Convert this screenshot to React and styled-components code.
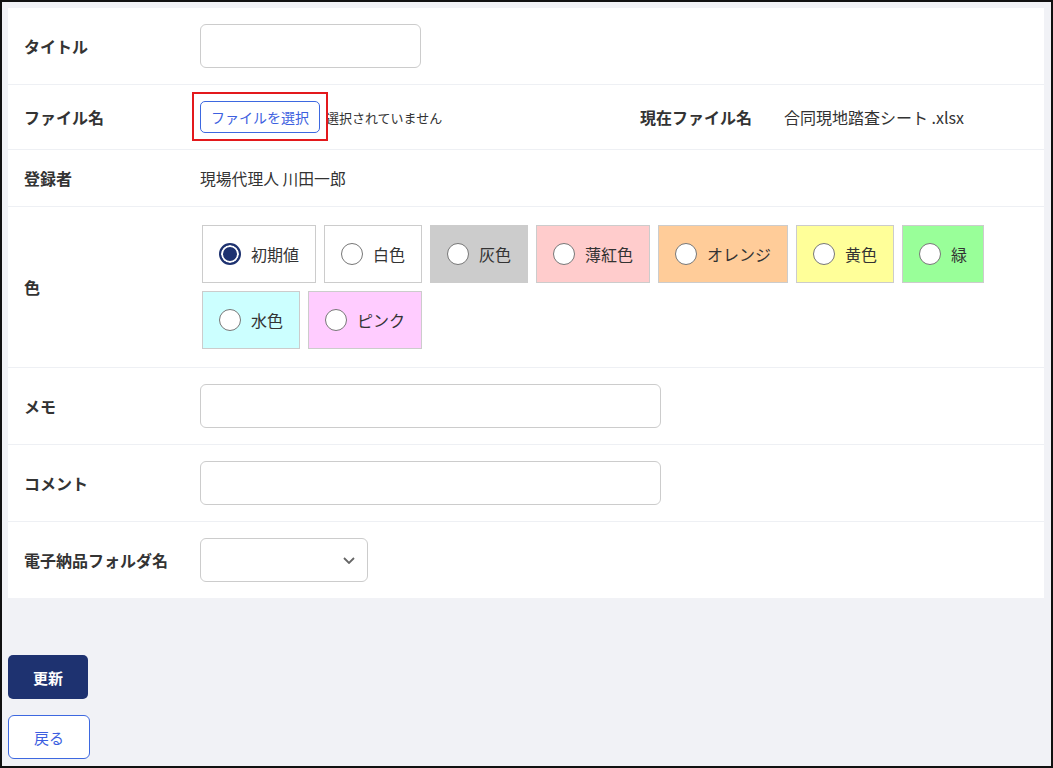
import styled, { createGlobalStyle } from 'styled-components';

const GlobalStyle = createGlobalStyle`
  html, body {
    margin: 0;
    padding: 0;
  }
  body {
    font-family: "Noto Sans CJK JP", "Noto Sans", sans-serif;
    color: #333;
  }
  * {
    box-sizing: border-box;
  }
`;

const colors = [
  { label: '初期値', bg: '#ffffff', checked: true },
  { label: '白色', bg: '#ffffff' },
  { label: '灰色', bg: '#cccccc' },
  { label: '薄紅色', bg: '#ffcccc' },
  { label: 'オレンジ', bg: '#ffcc99' },
  { label: '黄色', bg: '#ffff99' },
  { label: '緑', bg: '#99ff99' },
  { label: '水色', bg: '#ccffff' },
  { label: 'ピンク', bg: '#ffccff' },
];

const App = () => {
  return (
    <>
      <GlobalStyle />
      <Page>
        <Card>
          <Row>
            <Label>タイトル</Label>
            <TextInput type="text" width="221px" />
          </Row>
          <Row>
            <Label>ファイル名</Label>
            <FileCell>
              <FileHighlight>
                <FileButton type="button">ファイルを選択</FileButton>
              </FileHighlight>
              <FileNote>選択されていません</FileNote>
            </FileCell>
            <SubLabel>現在ファイル名</SubLabel>
            <Value>合同現地踏査シート .xlsx</Value>
          </Row>
          <Row tight>
            <Label>登録者</Label>
            <Value size="15.8px">現場代理人 川田一郎</Value>
          </Row>
          <Row colors>
            <Label>色</Label>
            <ColorList>
              {colors.map((c) => (
                <ColorOption key={c.label} bg={c.bg}>
                  <Radio type="radio" name="color" defaultChecked={c.checked} />
                  <span>{c.label}</span>
                </ColorOption>
              ))}
            </ColorList>
          </Row>
          <Row>
            <Label>メモ</Label>
            <TextInput type="text" width="461px" />
          </Row>
          <Row>
            <Label>コメント</Label>
            <TextInput type="text" width="461px" />
          </Row>
          <Row last>
            <Label>電子納品フォルダ名</Label>
            <SelectWrap>
              <Select defaultValue="">
                <option value=""></option>
              </Select>
              <Chevron width="12" height="7" viewBox="0 0 12 7">
                <path d="M1 1 L6 6 L11 1" fill="none" stroke="#666" strokeWidth="1.8" />
              </Chevron>
            </SelectWrap>
          </Row>
        </Card>
        <Actions>
          <PrimaryButton type="button">更新</PrimaryButton>
          <OutlineButton type="button">戻る</OutlineButton>
        </Actions>
      </Page>
    </>
  );
};

export default App;

const Page = styled.div`
  height: 768px;
  border: 2px solid #111;
  background: #f1f2f6;
  padding: 6px 7px 6px 6px;
  display: flex;
  flex-direction: column;
`;

const Card = styled.div`
  background: #fff;
  display: flex;
  flex-direction: column;
`;

const Row = styled.div`
  display: flex;
  align-items: center;
  padding: ${(p) => (p.colors ? '18px 16px 18px 16px' : '16px')};
  min-height: ${(p) => (p.tight ? '56px' : 'auto')};
  border-bottom: ${(p) => (p.last ? 'none' : '1px solid #eef0f4')};
  position: relative;
`;

const Label = styled.div`
  width: 176px;
  flex-shrink: 0;
  font-size: 16px;
  font-weight: 700;
  color: #333;
`;

const SubLabel = styled(Label)`
  width: 144px;
`;

const Value = styled.div`
  font-size: ${(p) => p.size || '16px'};
  color: #333;
`;

const TextInput = styled.input`
  width: ${(p) => p.width};
  height: 44px;
  border: 1px solid #ccc;
  border-radius: 6px;
  background: #fff;
  padding: 0 12px;
  font-size: 15px;
  font-family: inherit;
  outline: none;
`;

const FileCell = styled.div`
  width: 440px;
  display: flex;
  align-items: center;
  gap: 6px;
`;

const FileHighlight = styled.div`
  position: relative;
  display: flex;

  &::after {
    content: '';
    position: absolute;
    left: -8px;
    right: -8px;
    top: -9px;
    bottom: -8px;
    border: 2px solid #e3191c;
    pointer-events: none;
  }
`;

const FileButton = styled.button`
  height: 32px;
  width: 120px;
  padding: 0;
  border: 1px solid #3d68e0;
  border-radius: 5px;
  background: #fff;
  color: #3d5fe0;
  font-size: 14px;
  font-family: inherit;
  cursor: pointer;
`;

const FileNote = styled.span`
  font-size: 13px;
  color: #333;
`;

const ColorList = styled.div`
  display: flex;
  flex-wrap: wrap;
  gap: 8px;
  margin-left: 2px;
  width: 800px;
`;

const ColorOption = styled.label`
  display: flex;
  align-items: center;
  gap: 10px;
  height: 58px;
  padding: 0 16px;
  border: 1px solid #ccc;
  background: ${(p) => p.bg};
  font-size: 16px;
  color: #333;
  cursor: pointer;
`;

const Radio = styled.input`
  appearance: none;
  margin: 0;
  width: 22px;
  height: 22px;
  border-radius: 50%;
  border: 1px solid #777;
  background: #fff;
  flex-shrink: 0;

  &:checked {
    border: 2px solid #1e3270;
    background: #1e3270;
    box-shadow: inset 0 0 0 2px #fff;
  }
`;

const SelectWrap = styled.div`
  position: relative;
  width: 168px;
  height: 44px;
`;

const Select = styled.select`
  appearance: none;
  width: 100%;
  height: 100%;
  border: 1px solid #ccc;
  border-radius: 6px;
  background: #fff;
  padding: 0 12px;
  font-size: 15px;
  font-family: inherit;
  outline: none;
`;

const Chevron = styled.svg`
  position: absolute;
  right: 13px;
  top: 19px;
  pointer-events: none;
`;

const Actions = styled.div`
  display: flex;
  flex-direction: column;
  align-items: flex-start;
  gap: 16px;
  margin-top: 57px;
`;

const PrimaryButton = styled.button`
  width: 80px;
  height: 44px;
  border: none;
  border-radius: 5px;
  background: #1e3270;
  color: #fff;
  font-size: 15px;
  font-weight: 700;
  font-family: inherit;
  cursor: pointer;
`;

const OutlineButton = styled.button`
  width: 82px;
  height: 44px;
  border: 1px solid #3d68e0;
  border-radius: 6px;
  background: #fff;
  color: #3d5fe0;
  font-size: 15px;
  font-family: inherit;
  cursor: pointer;
`;
